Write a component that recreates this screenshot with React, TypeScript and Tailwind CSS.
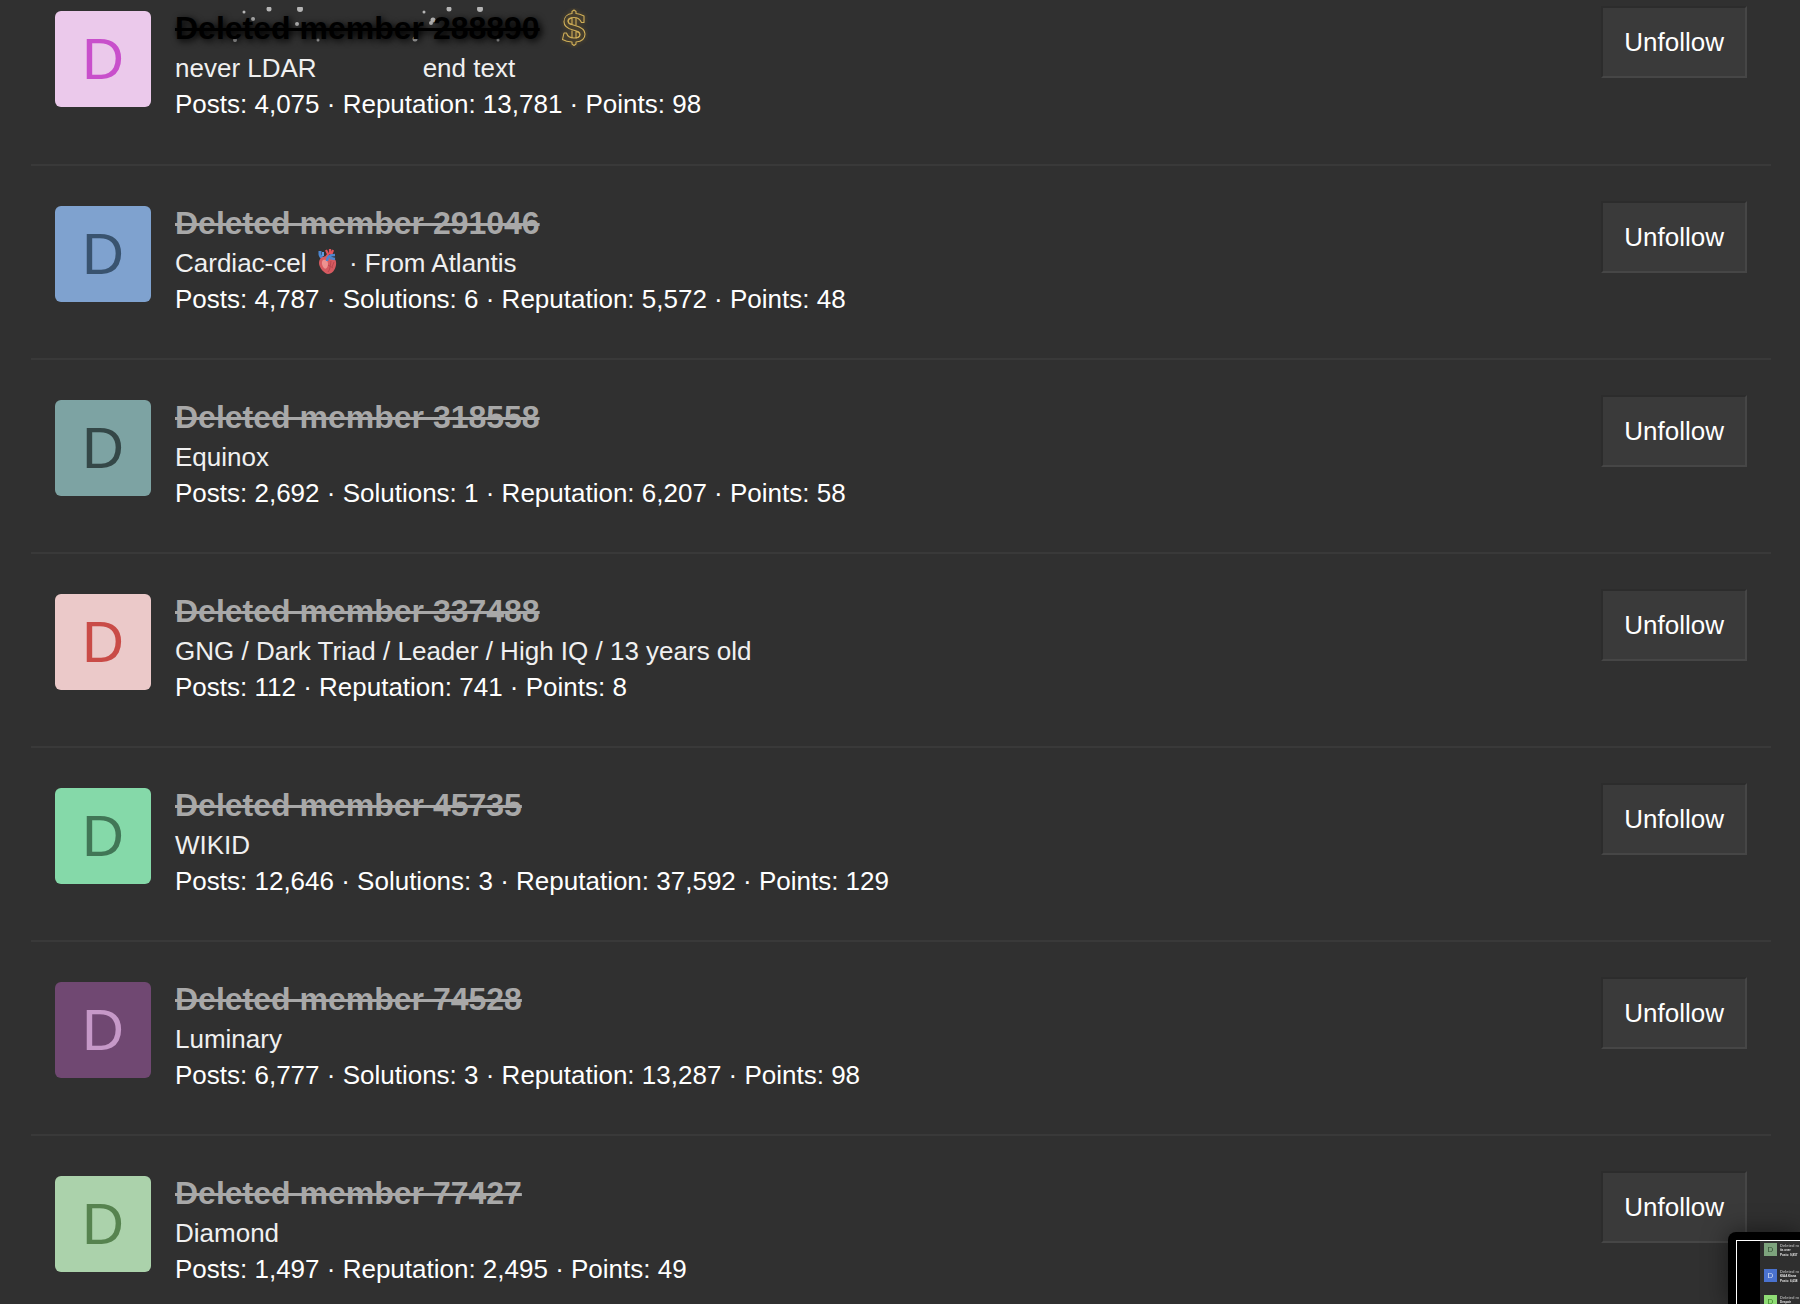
import clsx from "clsx";

type Member = {
  name: string;
  title: string;
  stats: string;
  avatar: string;
  variant?: "sparkle";
  heart?: boolean;
};

const MEMBERS: Member[] = [
  {
    name: "Deleted member 288890",
    title: "never LDAR",
    stats: "Posts: 4,075 · Reputation: 13,781 · Points: 98",
    avatar: "bg-[#ebc9eb] text-[#c84fcb]",
    variant: "sparkle",
  },
  {
    name: "Deleted member 291046",
    title: "Cardiac-cel",
    stats: "Posts: 4,787 · Solutions: 6 · Reputation: 5,572 · Points: 48",
    avatar: "bg-[#7fa2cf] text-[#39536f]",
    heart: true,
  },
  {
    name: "Deleted member 318558",
    title: "Equinox",
    stats: "Posts: 2,692 · Solutions: 1 · Reputation: 6,207 · Points: 58",
    avatar: "bg-[#7da3a3] text-[#344747]",
  },
  {
    name: "Deleted member 337488",
    title: "GNG / Dark Triad / Leader / High IQ / 13 years old",
    stats: "Posts: 112 · Reputation: 741 · Points: 8",
    avatar: "bg-[#ebc9c9] text-[#c94b47]",
  },
  {
    name: "Deleted member 45735",
    title: "WIKID",
    stats: "Posts: 12,646 · Solutions: 3 · Reputation: 37,592 · Points: 129",
    avatar: "bg-[#85d9a9] text-[#417656]",
  },
  {
    name: "Deleted member 74528",
    title: "Luminary",
    stats: "Posts: 6,777 · Solutions: 3 · Reputation: 13,287 · Points: 98",
    avatar: "bg-[#704872] text-[#c699c8]",
  },
  {
    name: "Deleted member 77427",
    title: "Diamond",
    stats: "Posts: 1,497 · Reputation: 2,495 · Points: 49",
    avatar: "bg-[#abd2ab] text-[#56834f]",
  },
];

const PREVIEW = [
  { name: "Deleted m", title: "its over", stats: "Posts: 9,857", avatar: "bg-[#7da37d] text-[#344f34]" },
  { name: "Deleted m", title: "KIAA Kiana", stats: "Posts: 6,658", avatar: "bg-[#4a72cf] text-[#d3dcf2]" },
  { name: "Deleted m", title: "Despair", avatar: "bg-[#8fdc75] text-[#3f7f2b]" },
];

// x, y, radius of each glitter speck behind the name
const SPECKS = [
  [69, 14, 1.5],
  [94, 11, 2.5],
  [125, 11, 3],
  [78, 21, 2],
  [122, 26, 2],
  [60, 42, 2],
  [143, 42, 1.5],
  [249, 14, 1.5],
  [274, 11, 2.5],
  [305, 11, 3],
  [258, 22, 2.5],
  [256, 25, 2],
  [266, 32, 1.5],
  [240, 41, 2.5],
  [323, 42, 1.5],
];

function Specks() {
  return (
    <svg
      aria-hidden="true"
      className="pointer-events-none absolute left-0 -top-2 h-[60px] w-[370px]"
      viewBox="0 0 370 60"
    >
      <defs>
        <clipPath id="speck-clip">
          <rect x="0" y="9" width="370" height="36" />
        </clipPath>
      </defs>
      <g fill="#b5b5b5" clipPath="url(#speck-clip)">
        {SPECKS.map(([x, y, r]) => (
          <circle key={`${x}-${y}`} cx={x} cy={y} r={r} />
        ))}
      </g>
    </svg>
  );
}

function DollarIcon() {
  return (
    <svg aria-hidden="true" className="h-10 w-7 shrink-0" viewBox="0 0 28 40" fill="none">
      <g
        stroke="#cfae58"
        strokeWidth="1.1"
        strokeLinejoin="round"
        className="drop-shadow-[0_0_2px_#80662a]"
      >
        <path d="M12 5.500V3.500L14 2l2 1.500v2c3 .3 5.500 1.300 8 2.500v6.500h-2.500C20 11 18 9.500 14 9.500c-4 0-6 1.500-6 3.500 0 2.500 2 3.200 7 4.500 7 1.800 10 4 10 8.500 0 5-4 7.500-9 8v2L14 37.500 12 36v-2c-4-.2-7-1-9.500-2.500L4 25h2.500c1 3.500 3.500 5 7.500 5 4 0 6-1.500 6-3.500 0-2.500-2-3.200-7-4.500-6-1.600-9-3.700-9-8.300C4 9 7.500 6 12 5.500Z" />
        <path d="M12 10v6.500c-5-1-5-5.500 0-6.500ZM16 10v7.500M12 22.500V30M16 23.500V30c5-1 5-5.500 0-6.500Z" />
      </g>
    </svg>
  );
}

function HeartIcon() {
  return (
    <svg
      role="img"
      aria-label="anatomical heart"
      className="mx-1 inline-block h-[26px] w-5 align-[-3px]"
      viewBox="0 0 20 26"
      fill="none"
    >
      <path d="M2 2v3c0 3 2 4 4 5" stroke="#4c86cf" strokeWidth="3" />
      <path d="M5 3v4" stroke="#5f9ce0" strokeWidth="2" />
      <path d="M8 10C8 6 10 6 11 5M8 1l2 4M12 0v5M15 1l-2 5" stroke="#e5545c" strokeWidth="2.200" />
      <path d="M3 9c3-2 6-2 9-1 4 0 7 3 6 8-.7 5-4 9-8 9-3 0-9-6-9-11 0-2 .6-4 2-5Z" fill="#d65a60" />
      <path d="M5 11c3-1 5 1 5 4s-2 6-4 4-3-6-1-8Z" fill="#ee9290" />
      <path d="M13 12c-1 4 0 7-3 11M10 16l5 3M16 13l-2 5" stroke="#b8484f" />
      <path d="M9 12c0-4 3-6 8-6M12 9l5 1" stroke="#4c86cf" strokeWidth="2.500" />
    </svg>
  );
}

function MemberRow({ member }: { member: Member }) {
  const sparkle = member.variant === "sparkle";

  return (
    <li className="flex items-start border-b-2 border-[#393939] px-6 pt-[35px] pb-[41px] first:pt-[6px] first:pb-[42px] last:border-b-0 last:pb-0">
      <a
        href="#member"
        aria-label={member.name}
        className={clsx(
          "mt-[5px] flex size-24 shrink-0 items-center justify-center rounded-md text-[58px] leading-none",
          member.avatar
        )}
      >
        D
      </a>

      <div className="ml-6 min-w-0 flex-1">
        <h3 className="flex h-11 items-center text-[32px] leading-[44px] font-bold">
          <a
            href="#member"
            className={clsx(
              "relative line-through decoration-[3px]",
              sparkle ? "text-black [text-shadow:2px_2px_7px_#000]" : "text-[#a8a8a8]"
            )}
          >
            {sparkle && <Specks />}
            <span className="relative">{member.name}</span>
          </a>
          {sparkle && (
            <span className="ml-5">
              <DollarIcon />
            </span>
          )}
        </h3>
        <div className="text-[26px] leading-9 text-[#f0f0f0]">
          {member.title}
          {sparkle && <span className="ml-[106px]">end text</span>}
          {member.heart && (
            <>
              {" "}
              <HeartIcon /> · <a href="#location">From Atlantis</a>
            </>
          )}
        </div>
        <div className="text-[26px] leading-9 text-white">{member.stats}</div>
      </div>

      <button
        type="button"
        className="h-[72px] shrink-0 border-2 border-t-[#2c2c2c] border-r-[#464646] border-b-[#464646] border-l-[#2c2c2c] bg-[#3a3a3a] px-[21px] text-[26px] text-white"
      >
        Unfollow
      </button>
    </li>
  );
}

/* Floating screen thumbnail in the corner of the window */
function FloatingPreview() {
  return (
    <aside
      aria-label="Preview"
      className="fixed right-0 bottom-0 h-[72px] w-[72px] overflow-hidden rounded-tl-lg bg-black pt-2 pl-2 shadow-[0_0_24px_rgba(0,0,0,0.5)]"
    >
      <div className="h-full border-t border-l border-white pl-[23px]">
        <ul className="h-full bg-[#2f2f2f] pt-[2px] pl-1">
          {PREVIEW.map((item) => (
            <li key={item.title} className="flex h-[26px] gap-[3px] whitespace-nowrap">
              <span
                className={clsx(
                  "flex size-[13px] shrink-0 items-center justify-center text-[8px] leading-none",
                  item.avatar
                )}
              >
                D
              </span>
              <div className="text-[3px] leading-[5px] font-bold text-[#e5e5e5]">
                <div className="text-[4px] text-[#a8a8a8]">{item.name}</div>
                <div>{item.title}</div>
                {item.stats && <div>{item.stats}</div>}
              </div>
            </li>
          ))}
        </ul>
      </div>
    </aside>
  );
}

export default function App() {
  return (
    <main className="min-h-screen overflow-hidden bg-[#303030] pr-[29px] pl-[31px] font-['Liberation_Sans',Arial,sans-serif]">
      <ol>
        {MEMBERS.map((member) => (
          <MemberRow key={member.name} member={member} />
        ))}
      </ol>
      <FloatingPreview />
    </main>
  );
}
